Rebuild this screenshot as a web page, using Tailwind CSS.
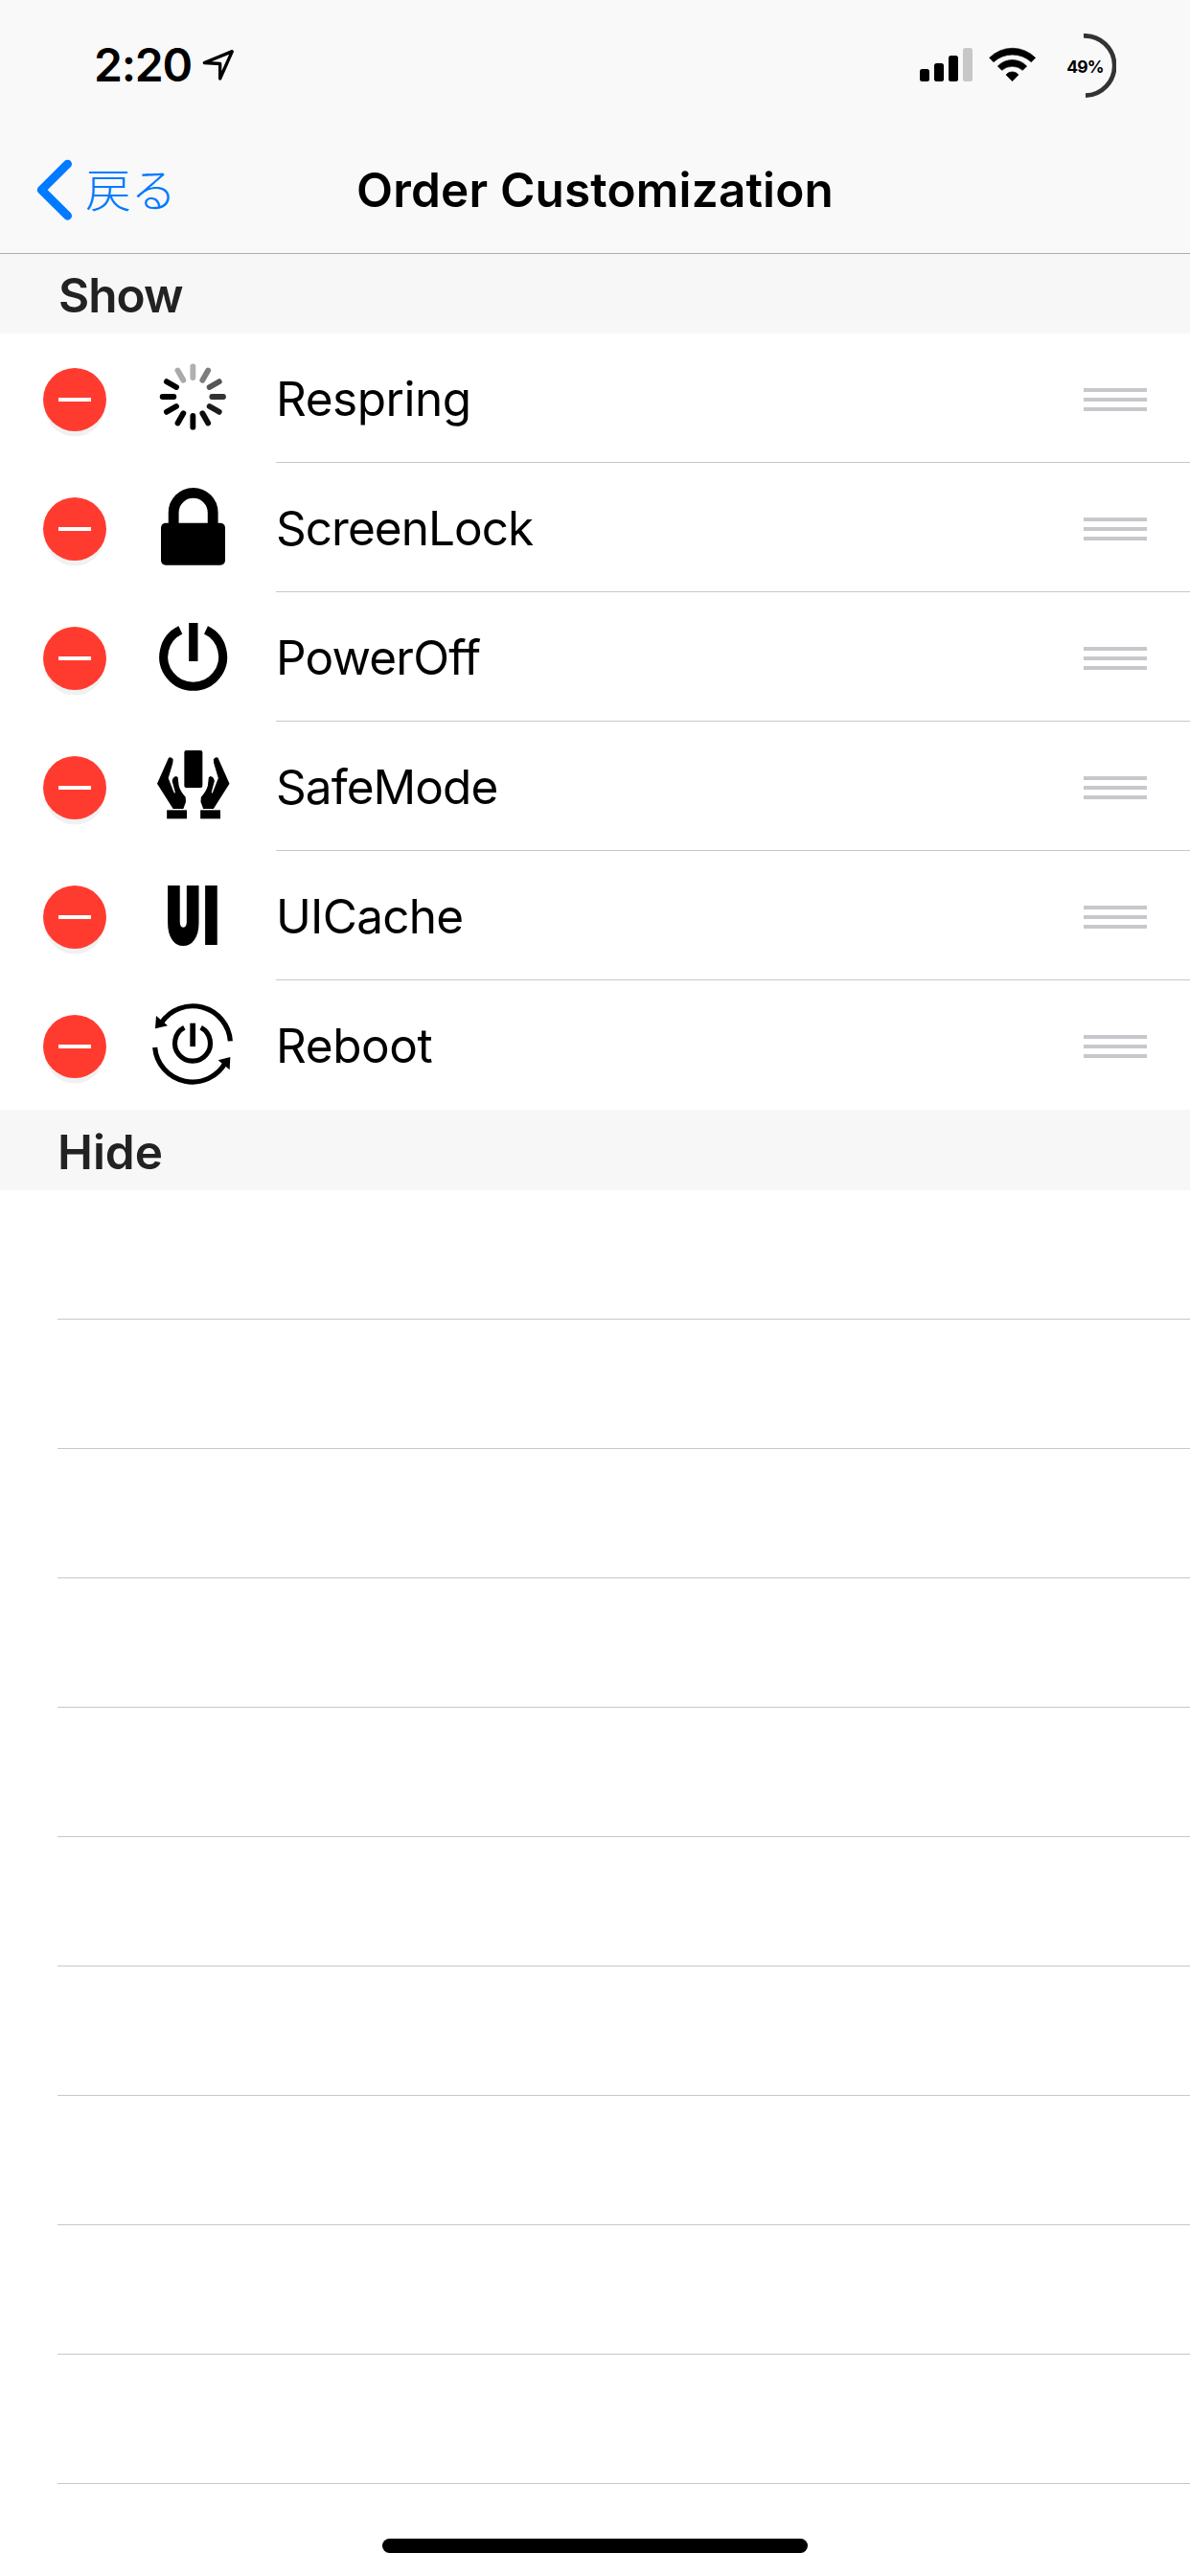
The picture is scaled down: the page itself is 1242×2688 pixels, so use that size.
<!DOCTYPE html>
<html lang="ja">
<head>
<meta charset="utf-8">
<title>Order Customization</title>
<script src="https://cdn.jsdelivr.net/npm/@tailwindcss/browser@4"></script>
</head>
<body class="bg-white">
<div class="relative flex h-[2688px] w-[1242px] flex-col overflow-hidden bg-white font-['Inter','Noto_Sans_CJK_JP',sans-serif] text-[49.5px] leading-[60px] text-black">

  <header class="h-[265px] shrink-0 border-b border-[#acacac] bg-[#f9f9f9]">
    <!-- Status bar -->
    <div class="flex h-[132px] items-start pr-[77px] pl-[98px]">
      <div class="mt-[38px] w-[113px] text-[48px] font-semibold tracking-[-1.2px] whitespace-nowrap">2:20</div>
      <svg class="mt-[51px] h-[33px] w-[34px]" viewBox="633 153 102 99" fill="none" stroke="#000" stroke-width="10" stroke-linejoin="round"><path d="M727 161 640 196.500 689 199.500 689 246Z"/></svg>
      <svg class="mt-[50px] ml-auto h-[35px] w-[55px]" viewBox="0 0 55 35"><rect y="22" width="10" height="13" rx="2.500"/><rect x="15" y="16" width="10" height="19" rx="2.500"/><rect x="30" y="8" width="10" height="27" rx="2.500"/><rect x="45" width="10" height="35" rx="2.500" fill="#c7c7c7"/></svg>
      <svg class="mt-[49px] ml-[17px] h-[36px] w-[50px]" viewBox="396 147 150 108" stroke="#000" stroke-width="2" stroke-linejoin="round"><path d="M398 181A101 101 0 0 1 542 181L529 194A88 88 0 0 0 411 194ZM424 207A63 63 0 0 1 515 207L502 220A49 49 0 0 0 437 220ZM450 234A25 25 0 0 1 489 234L469.500 254Z"/></svg>
      <div class="relative mt-[35px] ml-[16px] h-[67px] w-[67px]">
        <svg class="h-[67px] w-[67px]" viewBox="0 0 67 67" fill="none" stroke="#333" stroke-width="4.700"><path d="M33 2.350A31.150 31.150 0 0 1 35 64.650"/></svg>
        <span class="absolute inset-x-0 top-[25px] pl-[2px] text-center text-[17.5px] leading-5 font-bold tracking-[-0.9px]">49%</span>
      </div>
    </div>
    <!-- Navigation bar -->
    <nav class="grid h-[132px] grid-cols-[1fr_auto_1fr] items-center">
      <a class="flex items-center pl-[38px] text-[#007aff]">
        <svg class="h-[64px] w-[38px]" viewBox="114 499 114 192" fill="none" stroke="currentColor" stroke-width="27" stroke-linecap="round" stroke-linejoin="round"><path d="M211.500 514.500 130 595.500 211.500 676.500"/></svg>
        <span class="ml-[13px] pb-[4px] font-['Noto_Sans_CJK_JP',sans-serif] text-[47.5px] font-light whitespace-nowrap">戻る</span>
      </a>
      <h1 class="font-semibold tracking-[0.17px] whitespace-nowrap">Order Customization</h1>
      <span></span>
    </nav>
  </header>

  <h2 class="flex h-[83px] shrink-0 items-center bg-[#f7f7f7] pt-[3px] pl-[61px] font-semibold tracking-[-0.96px] text-[#222]">Show</h2>

  <ul id="rows" class="shrink-0"></ul>

  <h2 class="flex h-[84px] shrink-0 items-center bg-[#f7f7f7] pt-[4px] pl-[60px] font-semibold text-[#222]">Hide</h2>

  <div id="empty" class="shrink-0 pl-[60px]"></div>

  <!-- Home indicator -->
  <div class="absolute bottom-[24px] left-[399px] h-[15px] w-[444px] rounded-full bg-black"></div>
</div>

<template id="row">
  <li class="group flex h-[135px]">
    <div class="flex w-[150px] items-center pt-[3px] pl-[45px]">
      <span class="flex h-[66px] w-[66px] items-center justify-center rounded-full bg-[#ff3b30] shadow-[0_7.5px_0_-2px_#f1f1f1]"><i class="h-[4px] w-[34px] bg-white"></i></span>
    </div>
    <svg class="h-[135px] w-[108px]"></svg>
    <div class="ml-[30px] flex flex-1 items-center border-b border-[#c8c7cc] pt-[4px] pr-[45px] group-last:border-transparent">
      <span class="label pb-[2px] whitespace-nowrap"></span>
      <span class="ml-auto flex w-[66px] flex-col gap-[6px]"><i class="h-[4px] bg-[#c8c7cc]"></i><i class="h-[4px] bg-[#c8c7cc]"></i><i class="h-[4px] bg-[#c8c7cc]"></i></span>
    </div>
  </li>
</template>

<script>
const shades = ['#b0b0b0', '#7d7d7d', '#555', '#333', '#1c1c1c', '#0e0e0e', '#000', '#000', '#000', '#000', '#000', '#aaa'];
const spinner = shades.map((c, i) => `<path d="M604 162V127" stroke="${c}" stroke-width="17.5" stroke-linecap="round" transform="rotate(${i * 30} 604 222)"/>`).join('');
const hand = 'M528 542Q535 538 542 547L541 559 527 606 545 652Q549 656 548 649L539 615Q541 601 552 600L557 604 560 630Q565 648 581 665L582 680 574 702H542L492 623Z';
const A = '450 24 324 405', B = '450 429 324 405';
// name, letter spacing, icon viewBox, icon
const items = [
  ['Respring', -0.47, A, spinner],
  ['ScreenLock', -0.98, B, '<path d="M543.500 625V584.500A61.500 61.500 0 0 1 666.500 584.500V625" fill="none" stroke="#000" stroke-width="32.500"/><rect x="504" y="617" width="201" height="132.500" rx="15"/>'],
  ['PowerOff', -0.81, A, '<path d="M645 142.300A92.800 92.800 0 1 1 565 142.300" fill="none" stroke="#000" stroke-width="27"/><rect x="591.500" y="120" width="28" height="120"/>'],
  ['SafeMode', -0.93, B, `<rect x="577" y="519" width="57" height="117" rx="6"/><path d="${hand}"/><path d="${hand}" transform="matrix(-1 0 0 1 1210.500 0)"/><rect x="522.500" y="706" width="62.500" height="27"/><rect x="627.500" y="706" width="62.500" height="27"/>`],
  ['UICache', -0.72, A, '<g font-family="Inter" font-weight="900" font-size="231" stroke="#000" stroke-width="5"><text vector-effect="non-scaling-stroke" transform="translate(524.500 307.500) scale(.596 1)">U</text><text vector-effect="non-scaling-stroke" transform="translate(641.500 307.500) scale(.596 1)">I</text></g>'],
  ['Reboot', -0.41, B, '<g fill="none" stroke="#000" stroke-width="15.5"><path d="M721 619A118 118 0 0 0 505 562M485 639A118 118 0 0 0 707 684M629 577A55.500 55.500 0 1 1 577 577"/></g><path d="M489 540 486 580 525 571ZM721 669 719 709 683 679Z"/><rect x="595" y="563" width="17" height="73"/>'],
];
const list = document.getElementById('rows'), tpl = document.getElementById('row');
for (const [name, spacing, box, art] of items) {
  const row = tpl.content.cloneNode(true);
  const svg = row.querySelector('svg'), label = row.querySelector('.label');
  svg.setAttribute('viewBox', box);
  svg.innerHTML = art;
  label.textContent = name;
  label.style.letterSpacing = spacing + 'px';
  list.append(row);
}
document.getElementById('empty').innerHTML = '<div class="h-[135px] border-b border-[#c8c7cc]"></div>'.repeat(10);
</script>
</body>
</html>
